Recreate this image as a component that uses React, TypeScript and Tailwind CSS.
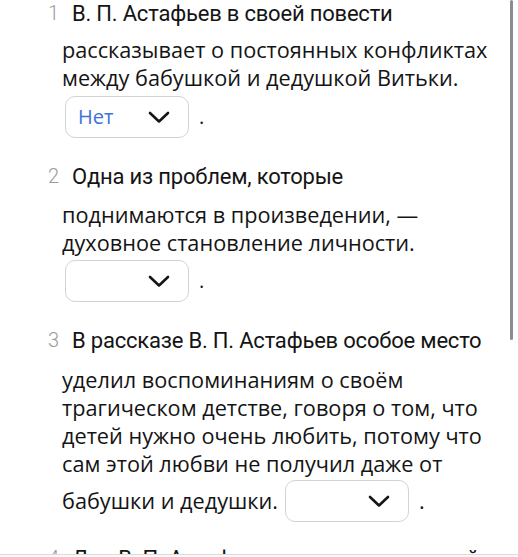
import React from "react";

const titleFont = { fontFamily: 'Roboto, "Liberation Sans", sans-serif' };
const bodyFont = { fontFamily: '"Open Sans", sans-serif' };

function Chevron() {
  return (
    <svg width="22" height="13" viewBox="0 0 22 13" fill="none">
      <path d="M2 2 L11 10.5 L20 2" stroke="#161616" strokeWidth="2.6" strokeLinecap="round" strokeLinejoin="round" />
    </svg>
  );
}

function Select({ value }: { value?: string }) {
  return (
    <div className="flex h-[42px] w-[124px] items-center justify-between rounded-[10px] border border-[#d3d3d3] bg-white pl-[12px] pr-[18px]">
      <span className="text-[20px] leading-none text-[#3d72d9]" style={bodyFont}>
        {value ?? ""}
      </span>
      <Chevron />
    </div>
  );
}

function Title({ n, text }: { n: number; text: string }) {
  return (
    <div className="flex h-[26px] items-center" style={titleFont}>
      <span className="box-content w-[24px] pl-[48px] text-[20px] font-light text-[#9b9b9b]">{n}</span>
      <span className="whitespace-nowrap text-[22px] tracking-[-0.2px] text-[#141414]">{text}</span>
    </div>
  );
}

export default function App() {
  return (
    <div className="relative h-[557px] w-[518px] overflow-hidden bg-white">
      <div className="flex flex-col">
        {/* Item 1 */}
        <div>
          <Title n={1} text="В. П. Астафьев в своей повести" />
          <div className="mt-[10px] pl-[62px] text-[21.7px] leading-[28px] text-[#141414]" style={bodyFont}>
            <div>рассказывает о постоянных конфликтах</div>
            <div>между бабушкой и дедушкой Витьки.</div>
          </div>
          <div className="mt-[4px] flex items-center gap-[10px] pl-[65px]">
            <Select value="Нет" />
            <span className="text-[20px] text-[#141414]" style={bodyFont}>.</span>
          </div>
        </div>

        {/* Item 2 */}
        <div className="mt-[25px]">
          <Title n={2} text="Одна из проблем, которые" />
          <div className="mt-[12px] pl-[62px] text-[21.7px] leading-[28px] text-[#141414]" style={bodyFont}>
            <div>поднимаются в произведении, —</div>
            <div>духовное становление личности.</div>
          </div>
          <div className="mt-[3px] flex items-center gap-[10px] pl-[65px]">
            <Select />
            <span className="text-[20px] text-[#141414]" style={bodyFont}>.</span>
          </div>
        </div>

        {/* Item 3 */}
        <div className="mt-[25px]">
          <Title n={3} text="В рассказе В. П. Астафьев особое место" />
          <div className="mt-[13px] pl-[62px] text-[21.7px] leading-[28px] text-[#141414]" style={bodyFont}>
            <div>уделил воспоминаниям о своём</div>
            <div>трагическом детстве, говоря о том, что</div>
            <div>детей нужно очень любить, потому что</div>
            <div>сам этой любви не получил даже от</div>
            <div className="mt-[2px] flex items-center">
              <span>бабушки и дедушки.</span>
              <div className="ml-[7px]">
                <Select />
              </div>
              <span className="ml-[10px]">.</span>
            </div>
          </div>
        </div>

        {/* Item 4 */}
        <div className="mt-[23px]">
          <Title n={4} text="Для В. П. Астафьева детство — светлый" />
        </div>
      </div>

      {/* scrollbar */}
      <div className="absolute left-[510px] top-0 h-[340px] w-[3px] rounded-full bg-[#8c8c8c]" />

      {/* bottom bar */}
      <div className="absolute bottom-0 left-0 h-[3px] w-full border-t border-[#dcdcdc] bg-[#fafafa]" />
    </div>
  );
}
